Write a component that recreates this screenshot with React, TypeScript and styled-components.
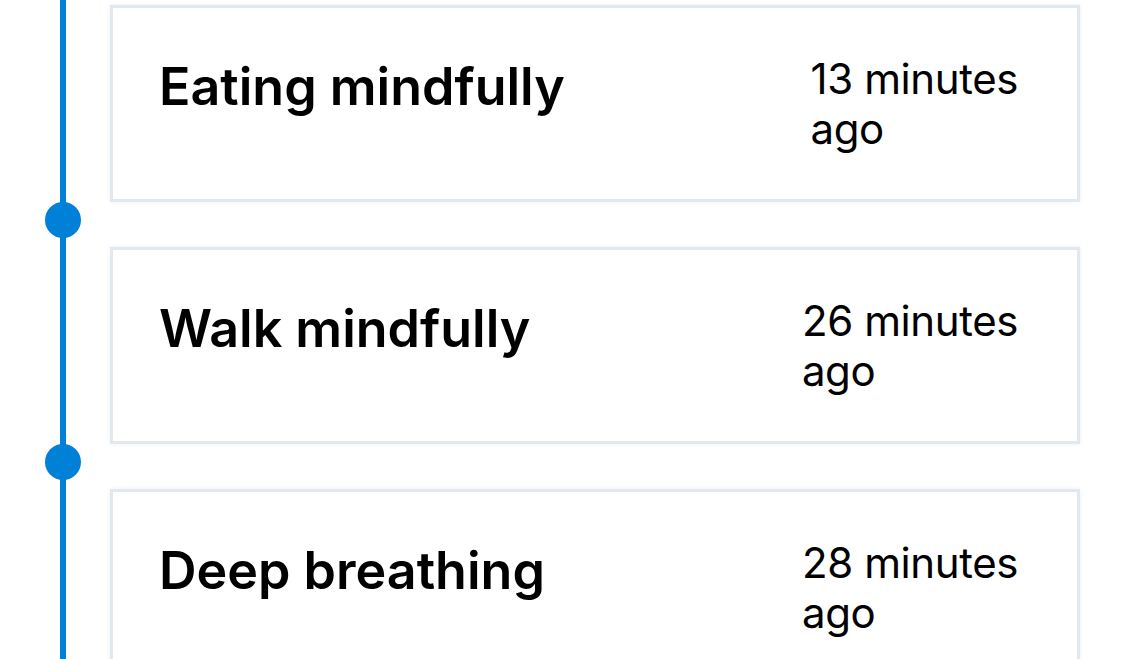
import React from "react";
import styled, { createGlobalStyle } from "styled-components";

const GlobalStyle = createGlobalStyle`
  html, body {
    margin: 0;
    padding: 0;
    background: #ffffff;
    overflow: hidden;
  }
  body {
    font-family: Inter, "Liberation Sans", Arial, sans-serif;
    color: #000000;
  }
  * { box-sizing: border-box; }
`;

const Timeline = styled.div`
  position: relative;
  padding-top: 5px;
  min-height: 700px;

  &::before {
    content: "";
    position: absolute;
    left: 60px;
    top: 0;
    bottom: 0;
    width: 6px;
    background: #0180d8;
  }
`;

const Card = styled.section`
  margin-left: 110px;
  width: 970px;
  height: 197px;
  background: #ffffff;
  border: 3px solid #e2e8ef;
  box-shadow: 0 0 4px rgba(30, 50, 80, 0.08);
  display: flex;
  justify-content: space-between;
  align-items: flex-start;
  padding: 46px 59px 0 46px;
`;

const Title = styled.h2`
  margin: 2px 0 0;
  font-size: 52px;
  line-height: 62px;
  font-weight: 600;
  letter-spacing: 0;
  white-space: nowrap;
`;

const Time = styled.div`
  font-size: 42px;
  line-height: 50px;
  font-weight: 400;
  letter-spacing: -0.4px;
  white-space: nowrap;
  flex: none;
`;

const Connector = styled.div`
  position: relative;
  z-index: 1;
  height: 45px;
  padding-left: 45px;
`;

const Dot = styled.span`
  display: block;
  width: 36px;
  height: 36px;
  border-radius: 50%;
  background: #0180d8;
`;

const items = [
  { title: "Eating mindfully", time: ["13 minutes", "ago"] },
  { title: "Walk mindfully", time: ["26 minutes", "ago"] },
  { title: "Deep breathing", time: ["28 minutes", "ago"] },
];

export default function App() {
  return (
    <>
      <GlobalStyle />
      <Timeline>
        {items.map((item, i) => (
          <React.Fragment key={item.title}>
            <Card>
              <Title>{item.title}</Title>
              <Time>
                {item.time[0]}
                <br />
                {item.time[1]}
              </Time>
            </Card>
            {i < items.length - 1 && (
              <Connector>
                <Dot />
              </Connector>
            )}
          </React.Fragment>
        ))}
      </Timeline>
    </>
  );
}
